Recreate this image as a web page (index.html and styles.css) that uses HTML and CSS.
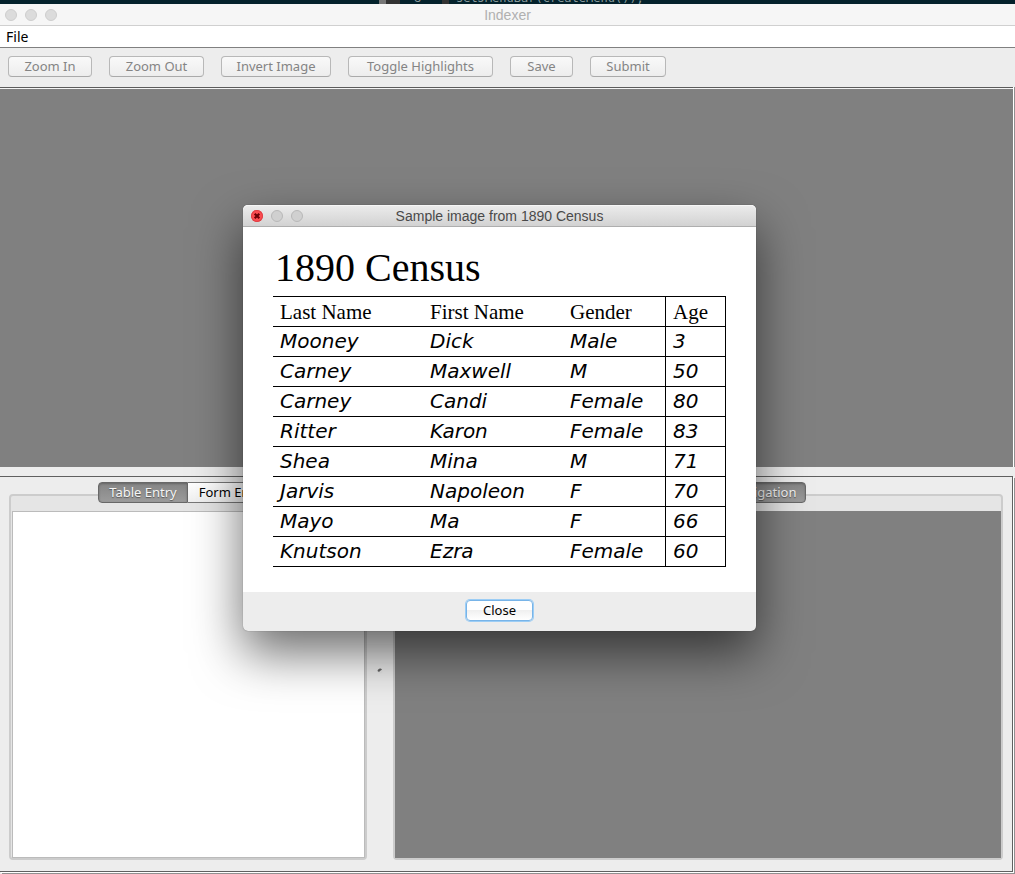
FILE: index.html
```html
<!DOCTYPE html>
<html lang="en">
<head>
<meta charset="utf-8">
<title>Indexer</title>
<link rel="stylesheet" href="styles.css">
</head>
<body>
<div class="editor" aria-hidden="true"><span class="mark"></span><span class="fold"></span><span class="num">8</span><span class="gutter"></span><code>setJMenuBar(createMenu());</code></div>
<main class="window">
  <header class="titlebar">
    <span class="light"></span><span class="light"></span><span class="light"></span>
    <h1 class="title">Indexer</h1>
  </header>
  <nav class="menubar"><button class="menu" type="button">File</button></nav>
  <div class="toolbar">
    <button class="btn zoom-in" type="button" disabled>Zoom In</button>
    <button class="btn zoom-out" type="button" disabled>Zoom Out</button>
    <button class="btn invert" type="button" disabled>Invert Image</button>
    <button class="btn toggle" type="button" disabled>Toggle Highlights</button>
    <button class="btn save" type="button" disabled>Save</button>
    <button class="btn submit" type="button" disabled>Submit</button>
  </div>
  <section class="viewer"></section>
  <section class="lower">
    <div class="pane entry">
      <div class="frame">
        <div class="tabs"><button class="tab selected" type="button">Table Entry</button><button class="tab" type="button">Form Entry</button></div>
        <div class="sheet"></div>
      </div>
    </div>
    <div class="divider"><svg width="6" height="6" viewBox="0 0 6 6"><circle cx="3" cy="3" r="2.5" fill="#e8e8e8"/><path d="M.5 3A2.5 2.5 0 0 1 5 1.5L3 3 2 4Z" fill="#666"/></svg></div>
    <div class="pane help">
      <div class="frame">
        <div class="tabs"><button class="tab selected wide" type="button">Image Navigation</button></div>
        <div class="sheet dark"></div>
      </div>
    </div>
  </section>
</main>
<section class="dialog" role="dialog" aria-labelledby="dialog-title">
  <header class="titlebar active">
    <button class="light close" type="button" aria-label="Close window"><svg width="12" height="12" viewBox="0 0 12 12"><path d="M3.7 3.7l4.6 4.6M8.3 3.7L3.7 8.3" stroke="#6b0006" stroke-width="2.2"/></svg></button><span class="light"></span><span class="light"></span>
    <h2 class="title" id="dialog-title">Sample image from 1890 Census</h2>
  </header>
  <div class="page">
    <h3 class="heading">1890 Census</h3>
    <table class="census">
      <colgroup><col class="c-last"><col class="c-first"><col class="c-gender"><col class="c-age"></colgroup>
      <thead><tr><th>Last Name</th><th>First Name</th><th>Gender</th><th>Age</th></tr></thead>
      <tbody>
        <tr><td>Mooney</td><td>Dick</td><td>Male</td><td>3</td></tr>
        <tr><td>Carney</td><td>Maxwell</td><td>M</td><td>50</td></tr>
        <tr><td>Carney</td><td>Candi</td><td>Female</td><td>80</td></tr>
        <tr><td>Ritter</td><td>Karon</td><td>Female</td><td>83</td></tr>
        <tr><td>Shea</td><td>Mina</td><td>M</td><td>71</td></tr>
        <tr><td>Jarvis</td><td>Napoleon</td><td>F</td><td>70</td></tr>
        <tr><td>Mayo</td><td>Ma</td><td>F</td><td>66</td></tr>
        <tr><td>Knutson</td><td>Ezra</td><td>Female</td><td>60</td></tr>
      </tbody>
    </table>
  </div>
  <footer class="actions"><button class="btn primary" type="button">Close</button></footer>
</section>
</body>
</html>
```
FILE: styles.css
```css
* { box-sizing: border-box; }
body {
  margin: 0;
  height: 100vh;
  display: flex;
  flex-direction: column;
  overflow: hidden;
  position: relative;
  background: #ededed;
  font: 13px "Noto Sans", "Open Sans", sans-serif;
}
button { font: inherit; }

.editor {
  flex: none;
  height: 4px;
  overflow: hidden;
  display: flex;
  align-items: flex-end;
  padding-left: 379px;
  background: #04222c;
  color: #8a9a9c;
  font: 12px/12px "DejaVu Sans Mono", monospace;
}
.mark { width: 7px; height: 4px; background: #777; }
.fold { width: 14px; height: 4px; background: #333; }
.num { width: 42px; padding-left: 14px; }
.gutter { width: 7px; height: 4px; background: #333; }
.editor code { padding-left: 7px; font: inherit; }

.window { flex: 1; display: flex; flex-direction: column; min-height: 0; }
.titlebar {
  flex: none;
  position: relative;
  display: flex;
  align-items: center;
  gap: 8px;
  height: 22px;
  padding-left: 5px;
  background: #f6f6f6;
  border-bottom: 1px solid #d0d0d0;
}
.title {
  position: absolute;
  inset: 0;
  margin: 0;
  text-align: center;
  font: 14px/22px "Liberation Sans", Arial, sans-serif;
  color: #b0b0b0;
  pointer-events: none;
}
.light {
  width: 12px;
  height: 12px;
  padding: 0;
  border: 1px solid #cecece;
  border-radius: 50%;
  background: #dcdcdc;
}
.menubar {
  flex: none;
  height: 22px;
  padding-left: 6px;
  background: #fff;
  border-bottom: 1px solid #808080;
}
.menu { padding: 0; border: 0; background: none; color: #000; font-size: 14px; line-height: 21px; }
.toolbar {
  flex: none;
  display: flex;
  gap: 17px;
  height: 39px;
  padding: 8px;
}
.btn {
  height: 21px;
  padding: 0;
  border: 1px solid #b8b8b8;
  border-bottom-color: #aaa;
  border-radius: 4px;
  background: linear-gradient(#f9f9f9, #ededed);
  color: #000;
  line-height: 19px;
}
.btn:disabled { color: #848484; }
.zoom-in { width: 84px; }
.zoom-out { width: 95px; }
.invert { width: 110px; }
.toggle { width: 145px; }
.save { width: 63px; }
.submit { width: 76px; }

.viewer {
  flex: 379 0 0px;
  margin-right: 2px;
  background: #808080;
  border-top: 1px solid #5c5c5c;
  box-shadow: inset 0 1px #f4f4f4, 1px 0 #fff, 2px 0 #909090;
}
.lower {
  flex: 379 0 18px;
  display: flex;
  min-height: 0;
  margin: 9px 2px 2px 0;
  padding: 5px 9px 11px 9px;
  border: solid #606060;
  border-width: 1px 1px 1px 0;
  box-shadow: 1px 1px #fff, 2px 2px #909090;
}
.pane { display: flex; padding-top: 12px; }
.entry { flex: 358; }
.help { flex: 610; }
.frame {
  flex: 1;
  display: flex;
  flex-direction: column;
  border: 2px solid #ccc;
  border-radius: 4px;
  background: #e5e5e5;
}
.tabs { flex: none; display: flex; justify-content: center; height: 15px; }
.tab {
  width: 90px;
  height: 21px;
  margin-top: -14px;
  padding: 0;
  border: 1px solid #777;
  border-left: 0;
  border-radius: 0 4px 4px 0;
  background: linear-gradient(#fff, #efefef);
  line-height: 19px;
}
.tab.selected {
  border: 1px solid #686868;
  border-radius: 4px 0 0 4px;
  background: linear-gradient(#858585, #9b9b9b);
  box-shadow: inset 0 1px 2px #666;
  color: #f5f5f5;
  text-shadow: 0 1px 1px #555;
}
.tab.wide { width: 215px; padding-right: 8px; border-radius: 4px; text-align: right; }
.sheet { flex: 1; border: 1px solid #bbb; margin-left: 1px; background: #fff; }
.sheet.dark { border: 0; margin: 0; background: #808080; }
.divider { flex: none; width: 26px; display: flex; align-items: center; justify-content: center; }

.dialog {
  position: absolute;
  left: 243px;
  top: 205px;
  width: 513px;
  border-radius: 5px;
  background: #ededed;
  box-shadow: 0 0 1px rgba(0, 0, 0, .5), 0 22px 50px rgba(0, 0, 0, .58);
}
.titlebar.active {
  padding-left: 8px;
  border-bottom-color: #aeaeae;
  border-radius: 5px 5px 0 0;
  background: linear-gradient(#ececec, #d2d2d2);
  box-shadow: inset 0 1px #f6f6f6;
}
.active .title { color: #4a4a4a; }
.active .light { border-color: #b8b8b8; background: #d0d0d0; }
.active .close { border: 0; background: #fb4b50; box-shadow: inset 0 0 0 1px #dd4046; }
.close svg { display: block; }
.page { padding: 17px 30px 25px; background: #fff; }
.heading {
  margin: 0;
  padding-left: 2px;
  font: 40px/48px "Liberation Serif", "Times New Roman", serif;
  height: 52px;
}
.census { width: 100%; table-layout: fixed; border-collapse: collapse; color: #000; }
.c-last { width: 150px; }
.c-first { width: 140px; }
.c-age { width: 60px; }
.census tr { height: 30px; border: solid #000; border-width: 1px 0; }
.census th, .census td { padding: 0 0 0 7px; text-align: left; }
.census th { font: 21px/24px "Liberation Serif", "Times New Roman", serif; }
.census td { padding-bottom: 2px; font: italic 20px/24px "DejaVu Sans", cursive; }
.census th:last-child, .census td:last-child { border: solid #000; border-width: 1px; }
.actions { display: flex; justify-content: center; padding: 8px 0 10px; }
.btn.primary {
  width: 67px;
  border-color: #78b4e8;
  background: linear-gradient(#fff 50%, #f0f0f0 50%, #fff);
  box-shadow: 0 0 0 1px #9ccdf5;
}
```
